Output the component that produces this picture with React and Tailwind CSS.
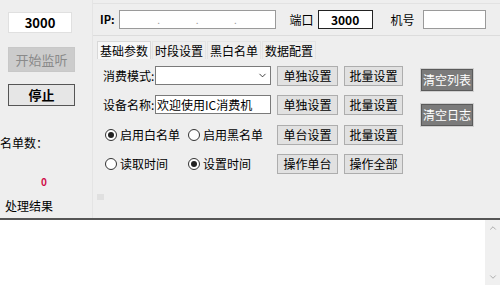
import { ChevronDown, ChevronUp } from 'lucide-react';

const font = { fontFamily: '"Noto Sans CJK SC", "Noto Sans", sans-serif' };

function Btn({ children, className = '' }) {
  return (
    <button
      type="button"
      className={`h-[20px] border border-[#adadad] bg-[#e1e1e1] text-[12px] leading-none text-black ${className}`}
    >
      {children}
    </button>
  );
}

function DarkBtn({ children }) {
  return (
    <button
      type="button"
      className="h-[24px] w-[54px] border border-[#d0d0d0] bg-[#7b7b7b] text-[12px] leading-none text-white shadow-[inset_0_0_0_1px_#5a5a5a]"
    >
      {children}
    </button>
  );
}

function Radio({ checked, label, className = '' }) {
  return (
    <label className={`flex items-center gap-[3px] text-[12px] ${className}`}>
      <span className="flex h-[12px] w-[12px] items-center justify-center rounded-full border border-[#333] bg-white">
        {checked && <span className="h-[6px] w-[6px] rounded-full bg-[#222]" />}
      </span>
      {label}
    </label>
  );
}

function Tab({ children, active }) {
  return (
    <div
      className={`flex h-[18px] items-center px-[2px] text-[12px] ${
        active ? 'bg-[#f8f8f8] border border-b-0 border-[#d8d8d8]' : 'border border-b-0 border-[#e4e4e4]'
      }`}
    >
      {children}
    </div>
  );
}

export default function App() {
  return (
    <div className="flex h-[285px] w-[500px] flex-col overflow-hidden bg-[#eeeeee] text-black" style={font}>
      <div className="flex h-[218px]">
        {/* left column */}
        <div className="relative flex w-[93px] flex-col border-r border-[#e4e4e4]">
          <div className="ml-[8px] mt-[12px] flex h-[21px] w-[64px] items-center justify-center border border-[#e0e0e0] bg-white text-[13px] font-semibold">
            3000
          </div>
          <button
            type="button"
            className="ml-[8px] mt-[14px] h-[25px] w-[67px] border border-[#c8c8c8] bg-[#cccccc] text-[13px] text-[#8a8a8a]"
          >
            开始监听
          </button>
          <button
            type="button"
            className="ml-[8px] mt-[12px] h-[22px] w-[67px] border border-[#555] bg-[#e6e6e6] text-[13px] font-bold"
          >
            停止
          </button>
          <div className="mt-[28px] text-[12px]">名单数：</div>
          <div className="ml-[41px] mt-[22px] text-[10px] font-bold text-[#d0104c]">0</div>
          <div className="ml-[5px] mt-[8px] text-[12px]">处理结果</div>
        </div>

        {/* right panel */}
        <div className="mt-[3px] flex flex-1 flex-col border-t border-[#e2e2e2]">
          <div className="flex h-[32px] items-center border-b border-[#dcdcdc] pl-[7px]">
            <span className="text-[11px] font-semibold">IP:</span>
            <div className="ml-[4px] flex h-[19px] w-[157px] items-center justify-around border border-[#9a9a9a] bg-white px-[20px] text-[10px] text-[#999]">
              <span>.</span>
              <span>.</span>
              <span>.</span>
            </div>
            <span className="ml-[14px] text-[12px]">端口</span>
            <div className="ml-[4px] flex h-[19px] w-[55px] items-center justify-center border border-[#222] bg-white text-[12px] font-bold">
              3000
            </div>
            <span className="ml-[18px] text-[12px]">机号</span>
            <div className="ml-[8px] h-[19px] w-[63px] border border-[#9a9a9a] bg-white" />
          </div>

          <div className="mt-[5px] flex gap-[1px] pl-[4px]">
            <Tab active>基础参数</Tab>
            <Tab>时段设置</Tab>
            <Tab>黑白名单</Tab>
            <Tab>数据配置</Tab>
          </div>

          <div className="flex pl-[10px] pt-[7px]">
            <div className="flex flex-col gap-[10px]">
              <div className="flex h-[19px] items-center">
                <span className="w-[52px] text-[12px]">消费模式:</span>
                <div className="flex h-[19px] w-[116px] items-center justify-end border border-[#7a7a7a] bg-white pr-[2px]">
                  <ChevronDown size={11} strokeWidth={1.6} />
                </div>
                <Btn className="ml-[6px] w-[61px]">单独设置</Btn>
                <Btn className="ml-[6px] w-[59px]">批量设置</Btn>
              </div>
              <div className="flex h-[19px] items-center">
                <span className="w-[52px] text-[12px]">设备名称:</span>
                <div className="flex h-[19px] w-[116px] items-center border border-[#7a7a7a] bg-white pl-[1px] text-[12px]">
                  欢迎使用IC消费机
                </div>
                <Btn className="ml-[6px] w-[61px]">单独设置</Btn>
                <Btn className="ml-[6px] w-[59px]">批量设置</Btn>
              </div>
              <div className="mt-[1px] flex h-[19px] items-center">
                <Radio checked label="启用白名单" className="w-[85px] pl-[2px]" />
                <Radio label="启用黑名单" className="w-[89px]" />
                <Btn className="w-[61px]">单台设置</Btn>
                <Btn className="ml-[6px] w-[59px]">批量设置</Btn>
              </div>
              <div className="flex h-[19px] items-center">
                <Radio label="读取时间" className="w-[85px] pl-[2px]" />
                <Radio checked label="设置时间" className="w-[89px]" />
                <Btn className="w-[61px]">操作单台</Btn>
                <Btn className="ml-[6px] w-[59px]">操作全部</Btn>
              </div>
            </div>
            <div className="ml-[17px] mt-[2px] flex flex-col gap-[11px]">
              <DarkBtn>清空列表</DarkBtn>
              <DarkBtn>清空日志</DarkBtn>
            </div>
          </div>

          <div className="ml-[4px] mt-auto mb-[18px] h-[6px] w-[7px] bg-[#e0e0e0]" />
        </div>
      </div>

      {/* result log */}
      <div className="flex flex-1 border-t-2 border-[#555] bg-white">
        <div className="flex-1" />
        <div className="flex w-[15px] flex-col items-center justify-between bg-[#f0f0f0] py-[3px] text-[#a0a0a0]">
          <ChevronUp size={10} strokeWidth={2} />
          <ChevronDown size={10} strokeWidth={2} />
        </div>
      </div>
    </div>
  );
}
